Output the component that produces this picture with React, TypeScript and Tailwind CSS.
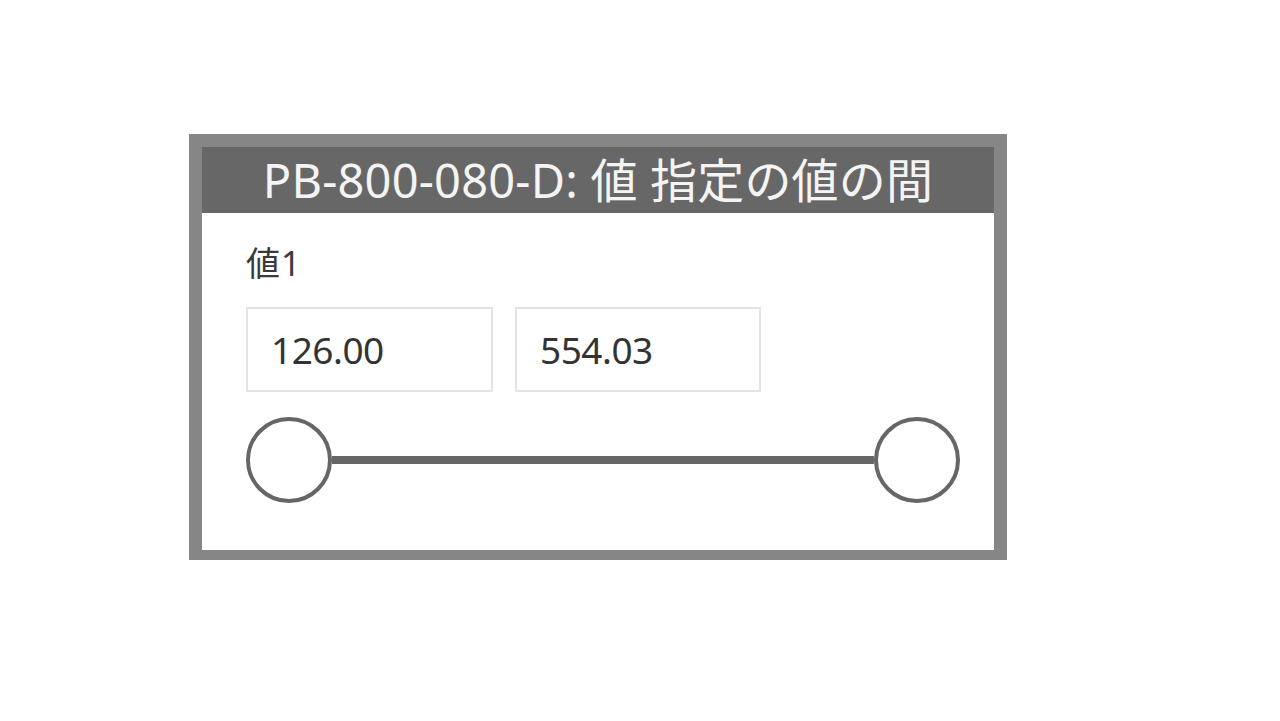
export default function App() {
  return (
    <div
      className="min-h-screen w-full bg-white pt-[134px] pl-[189px]"
      style={{ fontFamily: '"Noto Sans", "Noto Sans CJK JP", sans-serif' }}
    >
      <div className="w-[818px] border-[13px] border-b-[10px] border-[#868686] bg-white">
        <div className="h-[66px] bg-[#676767] flex items-center justify-center text-[47px] leading-none text-[#f4f4f4] tracking-[0.2px]">
          PB-800-080-D: 値 指定の値の間
        </div>

        <div className="pl-[44px] pr-[34px] pt-[33px] pb-[47px]">
          <div className="text-[34px] leading-none text-[#3a3a3a] tracking-[1px]">値1</div>

          <div className="mt-[27px] flex gap-[22px]">
            <div className="w-[247px] h-[85px] border-2 border-[#e4e4e4] flex items-center pl-[23px] text-[37px] text-[#333] tracking-[-0.5px]">
              126.00
            </div>
            <div className="w-[246px] h-[85px] border-2 border-[#e4e4e4] flex items-center pl-[23px] text-[37px] text-[#333] tracking-[-0.5px]">
              554.03
            </div>
          </div>

          <div className="mt-[25px] w-[714px] h-[86px] flex items-center">
            <div className="w-[86px] h-[86px] shrink-0 rounded-full border-4 border-[#666] bg-white" />
            <div className="flex-1 h-[8px] bg-[#666]" />
            <div className="w-[86px] h-[86px] shrink-0 rounded-full border-4 border-[#666] bg-white" />
          </div>
        </div>
      </div>
    </div>
  )
}
